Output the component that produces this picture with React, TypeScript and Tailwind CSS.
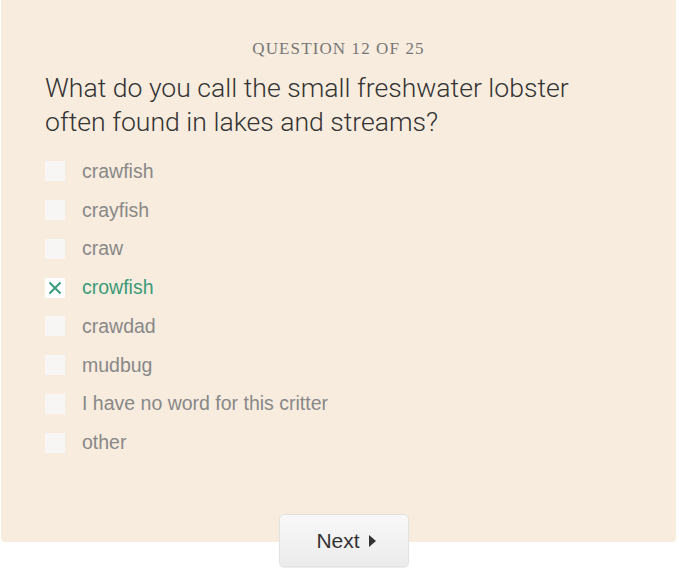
const options = [
  "crawfish",
  "crayfish",
  "craw",
  "crowfish",
  "crawdad",
  "mudbug",
  "I have no word for this critter",
  "other",
];

const selected = "crowfish";

function Option({ label, checked }: { label: string; checked: boolean }) {
  return (
    <li className="flex h-[38.75px] items-center">
      <span
        className={
          checked
            ? "flex h-5 w-5 items-center justify-center bg-white"
            : "h-5 w-5 bg-[#f7f6f5]"
        }
      >
        {checked && (
          <svg width="14" height="14" viewBox="0 0 14 14">
            <path d="M1.5 1.5 L12.5 12.5 M12.5 1.5 L1.5 12.5" stroke="#3a9b78" strokeWidth="2" />
          </svg>
        )}
      </span>
      <span
        className={
          checked
            ? "ml-[17px] text-[19.5px] text-[#3a9b78]"
            : "ml-[17px] text-[19.5px] text-[#888]"
        }
      >
        {label}
      </span>
    </li>
  );
}

export default function App() {
  return (
    <div className="h-[581px] w-[679px] bg-white font-['Liberation_Sans',Arial,sans-serif]">
      <div className="relative mx-[1px] h-[542px] w-[675px] rounded-b-[4px] bg-[#f8ecde] px-[44px] pt-[38px]">
        <p className="text-center font-['Liberation_Serif',serif] text-[17px] leading-[22px] tracking-[0.065em] text-[#777]">
          QUESTION 12 OF 25
        </p>
        <h1 className="mt-[11px] font-['Roboto',sans-serif] text-[26.6px] font-light leading-[34px] text-[#333]">
          What do you call the small freshwater lobster
          <br />
          often found in lakes and streams?
        </h1>
        <ul className="mt-[13px]">
          {options.map((o) => (
            <Option key={o} label={o} checked={o === selected} />
          ))}
        </ul>
        <button className="absolute left-[278px] top-[514px] flex h-[53px] w-[130px] items-center justify-center gap-[9px] rounded-[5px] border border-[#e2e2e2] bg-gradient-to-b from-[#f8f8f8] to-[#ececec] pl-[4px] text-[21px] text-[#333] shadow-[0_1px_1px_rgba(0,0,0,0.08)]">
          Next
          <svg width="7" height="12" viewBox="0 0 7 12">
            <path d="M0 0 L7 6 L0 12 Z" fill="#333" />
          </svg>
        </button>
      </div>
    </div>
  );
}
